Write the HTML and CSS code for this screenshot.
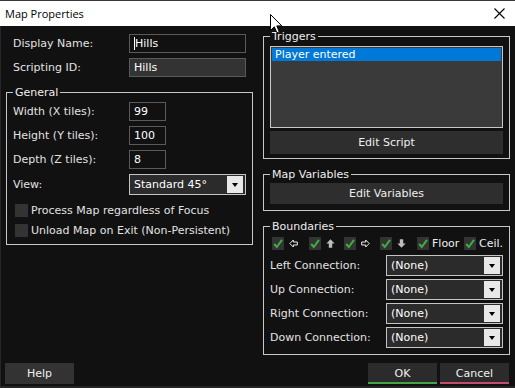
FILE: index.html
```html
<!DOCTYPE html>
<html>
<head>
<meta charset="utf-8">
<title>Map Properties</title>
<link rel="stylesheet" href="styles.css">
</head>
<body>
<div class="window">
  <div class="titlebar">
    <span class="title">Map Properties</span>
    <svg class="close" viewBox="0 0 11 11" width="11" height="11"><path d="M0.5 0.5 L10.5 10.5 M10.5 0.5 L0.5 10.5" stroke="#000" stroke-width="1.1" fill="none"/></svg>
  </div>
  <div class="main">
    <div class="col">
      <div class="top-rows">
        <div class="row"><span class="lbl">Display Name:</span><div class="input wide"><span class="caret"></span>Hills</div></div>
        <div class="row"><span class="lbl">Scripting ID:</span><div class="input wide disabled">Hills</div></div>
      </div>
      <fieldset class="group general">
        <legend>General</legend>
        <div class="rows">
          <div class="row"><span class="lbl">Width (X tiles):</span><div class="input small">99</div></div>
          <div class="row"><span class="lbl">Height (Y tiles):</span><div class="input small">100</div></div>
          <div class="row"><span class="lbl">Depth (Z tiles):</span><div class="input small">8</div></div>
          <div class="row"><span class="lbl">View:</span><div class="select"><span>Standard 45°</span><span class="arrow"></span></div></div>
        </div>
        <div class="checks">
          <div class="check-row"><span class="cb"></span><span class="cb-text">Process Map regardless of Focus</span></div>
          <div class="check-row"><span class="cb"></span><span class="cb-text">Unload Map on Exit (Non-Persistent)</span></div>
        </div>
      </fieldset>
    </div>
    <div class="col">
      <fieldset class="group triggers">
        <legend>Triggers</legend>
        <div class="list"><div class="list-item">Player entered</div></div>
        <div class="btn edit-script">Edit Script</div>
      </fieldset>
      <fieldset class="group mapvars">
        <legend>Map Variables</legend>
        <div class="btn edit-vars">Edit Variables</div>
      </fieldset>
      <fieldset class="group boundaries">
        <legend>Boundaries</legend>
        <div class="bchecks">
          <div class="bitem w37"><span class="cbx"><svg viewBox="0 0 12 13" width="12" height="13"><path d="M2.2 7 L4.8 10 L10 2.8" stroke="#3fae49" stroke-width="2" fill="none"/></svg></span><svg class="barrow" viewBox="0 0 9 9" width="9" height="9"><path d="M0.8 4.5 L4.3 1 V3 H8.3 V6 H4.3 V8 Z" stroke="#eee" stroke-width="1" fill="none"/></svg></div>
          <div class="bitem w35"><span class="cbx"><svg viewBox="0 0 12 13" width="12" height="13"><path d="M2.2 7 L4.8 10 L10 2.8" stroke="#3fae49" stroke-width="2" fill="none"/></svg></span><svg class="barrow" viewBox="0 0 9 9" width="9" height="9"><path d="M4.5 0.3 L8.6 4.4 H6.2 V8.8 H2.8 V4.4 H0.4 Z" fill="#bdbdbd"/></svg></div>
          <div class="bitem w36"><span class="cbx"><svg viewBox="0 0 12 13" width="12" height="13"><path d="M2.2 7 L4.8 10 L10 2.8" stroke="#3fae49" stroke-width="2" fill="none"/></svg></span><svg class="barrow" viewBox="0 0 9 9" width="9" height="9"><path d="M8.2 4.5 L4.7 1 V3 H0.7 V6 H4.7 V8 Z" stroke="#eee" stroke-width="1" fill="none"/></svg></div>
          <div class="bitem w37"><span class="cbx"><svg viewBox="0 0 12 13" width="12" height="13"><path d="M2.2 7 L4.8 10 L10 2.8" stroke="#3fae49" stroke-width="2" fill="none"/></svg></span><svg class="barrow" viewBox="0 0 9 9" width="9" height="9"><path d="M4.5 8.7 L8.6 4.6 H6.2 V0.2 H2.8 V4.6 H0.4 Z" fill="#bdbdbd"/></svg></div>
          <div class="bitem w47"><span class="cbx"><svg viewBox="0 0 12 13" width="12" height="13"><path d="M2.2 7 L4.8 10 L10 2.8" stroke="#3fae49" stroke-width="2" fill="none"/></svg></span><span class="btext">Floor</span></div>
          <div class="bitem"><span class="cbx"><svg viewBox="0 0 12 13" width="12" height="13"><path d="M2.2 7 L4.8 10 L10 2.8" stroke="#3fae49" stroke-width="2" fill="none"/></svg></span><span class="btext">Ceil.</span></div>
        </div>
        <div class="conns">
          <div class="row"><span class="lbl">Left Connection:</span><div class="select"><span>(None)</span><span class="arrow"></span></div></div>
          <div class="row"><span class="lbl">Up Connection:</span><div class="select"><span>(None)</span><span class="arrow"></span></div></div>
          <div class="row"><span class="lbl">Right Connection:</span><div class="select"><span>(None)</span><span class="arrow"></span></div></div>
          <div class="row"><span class="lbl">Down Connection:</span><div class="select"><span>(None)</span><span class="arrow"></span></div></div>
        </div>
      </fieldset>
    </div>
  </div>
  <div class="footer">
    <div class="btn fbtn help">Help</div>
    <div class="spacer"></div>
    <div class="btn fbtn ok">OK</div>
    <div class="btn fbtn cancel">Cancel</div>
  </div>
  <svg class="cursor" viewBox="0 0 13 20" width="13" height="20"><path d="M0.5 0.5 L0.5 16.5 L4.3 12.8 L6.9 18.8 L9.3 17.8 L6.8 11.9 L11.8 11.9 Z" fill="#fff" stroke="#000" stroke-width="1"/></svg>
</div>
</body>
</html>
```

FILE: styles.css
```css
* { box-sizing: border-box; }
html, body { margin: 0; padding: 0; background: #111; }
body {
  font-family: "DejaVu Sans", Verdana, sans-serif;
  font-size: 11px;
  color: #e2e2e2;
}
.window {
  position: relative;
  width: 515px;
  height: 388px;
  background: #111;
  box-shadow: inset 1px 0 0 #262626, inset 0 -2px 0 #262626;
  overflow: hidden;
}
.titlebar {
  height: 26px;
  background: #fff;
  border-top: 1px solid #3a3a3a;
  display: flex;
  align-items: center;
  justify-content: space-between;
  padding: 0 10px 0 5px;
}
.title {
  font-family: "Segoe UI", "Open Sans", sans-serif;
  font-size: 11px;
  color: #000;
}
.close { display: block; }
.main {
  display: flex;
  gap: 10px;
  padding-left: 6px;
}
.col {
  width: 247px;
  display: flex;
  flex-direction: column;
}
.top-rows {
  padding: 8px 0 0 7px;
  display: flex;
  flex-direction: column;
  gap: 5px;
}
.row {
  display: flex;
  align-items: center;
}
.lbl {
  width: 116px;
  flex: none;
  white-space: nowrap;
}
.input {
  height: 19px;
  border: 1px solid #5a5a5a;
  background: #111;
  color: #fff;
  padding-left: 4px;
  display: flex;
  align-items: center;
}
.input.wide { width: 117px; }
.input.small { width: 37px; }
.input.disabled { background: #333; }
.caret {
  width: 1px;
  height: 13px;
  background: #fff;
  margin-right: 0;
}
.group {
  margin: 0;
  border: 1px solid #c8c8c8;
  min-width: 0;
  width: 247px;
}
.group legend {
  padding: 0 2px;
  line-height: 13px;
  color: #eee;
}
.general {
  margin-top: 9px;
  padding: 3px 6px 7px 6px;
}
.rows {
  display: flex;
  flex-direction: column;
  gap: 5px;
}
.select {
  width: 117px;
  height: 21px;
  border: 1px solid #c4c4c4;
  background: #2b2b2b;
  color: #fff;
  display: flex;
  align-items: center;
  justify-content: space-between;
  padding: 1px 2px 1px 4px;
}
.arrow {
  width: 16px;
  height: 17px;
  background: #e8e8e8;
  display: flex;
  align-items: center;
  justify-content: center;
}
.arrow::after {
  content: "";
  width: 0;
  height: 0;
  border-top: 4px solid #000;
  border-left: 3.5px solid transparent;
  border-right: 3.5px solid transparent;
}
.checks {
  margin-top: 9px;
  padding-left: 2px;
  display: flex;
  flex-direction: column;
  gap: 7px;
}
.check-row {
  display: flex;
  align-items: center;
  height: 13px;
}
.cb {
  width: 13px;
  height: 13px;
  background: #333;
  flex: none;
}
.cb-text { margin-left: 3px; white-space: nowrap; }
.triggers {
  margin-top: 4px;
  padding: 3px 6px 4px 6px;
}
.list {
  height: 82px;
  border: 1px solid #c8c8c8;
  background: #3a3a3a;
  padding: 1px;
}
.list-item {
  background: #0078d7;
  color: #fff;
  height: 13px;
  line-height: 13px;
  padding-left: 3px;
}
.btn {
  background: #2e2e2e;
  color: #eee;
  display: flex;
  align-items: center;
  justify-content: center;
}
.edit-script { height: 23px; margin-top: 3px; }
.mapvars {
  margin-top: 9px;
  padding: 2px 6px 6px 6px;
}
.edit-vars { height: 21px; }
.boundaries {
  margin-top: 9px;
  padding: 4px 5px 6px 6px;
}
.bchecks {
  display: flex;
  align-items: center;
  height: 13px;
  padding-left: 2px;
}
.bitem {
  display: flex;
  align-items: center;
  flex: none;
}
.w35 { width: 35px; }
.w36 { width: 36px; }
.w37 { width: 37px; }
.w47 { width: 47px; }
.cbx {
  width: 12px;
  height: 13px;
  background: #333;
  display: block;
  flex: none;
}
.cbx svg { display: block; }
.barrow { margin-left: 5px; display: block; }
.btext { margin-left: 3px; color: #eee; }
.conns {
  margin-top: 5px;
  display: flex;
  flex-direction: column;
  gap: 3px;
}
.footer {
  display: flex;
  padding: 8px 6px 0 5px;
}
.spacer { flex: 1; }
.fbtn {
  width: 69px;
  height: 21px;
  color: #f0f0f0;
}
.help { background: #333; }
.ok { background: #2b2b2b; border-bottom: 2px solid #45a348; padding-top: 2px; }
.cancel { background: #2b2b2b; border-bottom: 2px solid #c24d6e; margin-left: 3px; padding-top: 2px; }
.cursor {
  position: absolute;
  left: 270px;
  top: 14px;
}
```
